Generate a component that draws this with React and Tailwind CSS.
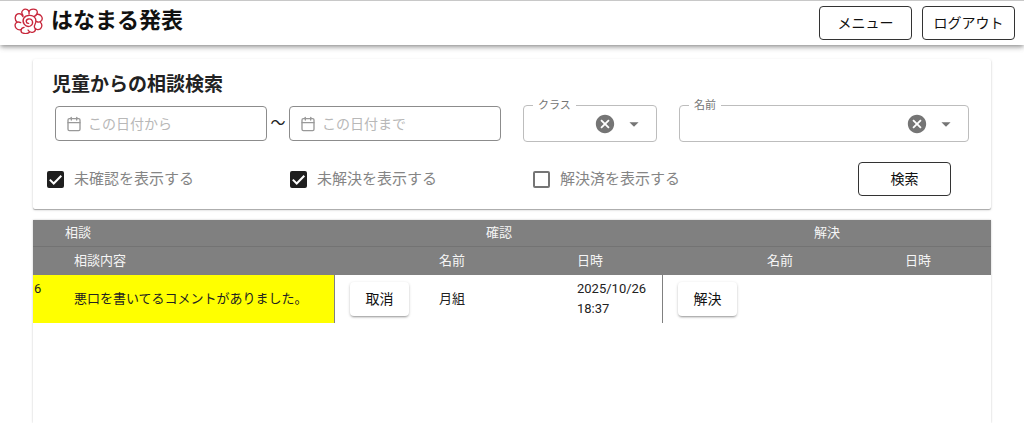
import { Calendar } from "lucide-react";
import { MdArrowDropDown, MdCancel } from "react-icons/md";

function FlowerLogo() {
  return (
    <svg
      viewBox="0 0 87 78"
      className="h-[26px] w-[29px] shrink-0"
      fill="none"
      stroke="#c8283c"
      strokeWidth="4"
      strokeLinecap="round"
      aria-hidden="true"
    >
      <path d="M27 22C17 10 31 0 40 5C45 8 46 13 45 18" />
      <path d="M45 11C48 1 68 0 70 12C70 19 66 23 61 25" />
      <path d="M69 19C80 17 88 29 83 37C79 43 72 43 67 40" />
      <path d="M79 43C88 51 82 66 71 65C65 64 61 59 61 54" />
      <path d="M65 62C64 75 48 77 42 66" />
      <path d="M47 72C39 80 21 77 21 68C21 62 25 59 30 58" />
      <path d="M21 65C9 68 1 57 4 48C7 42 14 41 20 44" />
      <path d="M9 42C0 34 3 17 15 17C21 17 25 21 27 26" />
      <path d="M44 46C36 47 33 36 43 33C56 31 61 47 49 54C34 60 23 43 29 31C36 19 58 19 65 33C67 40 66 46 62 52" />
    </svg>
  );
}

function OutlinedButton({ children }) {
  return (
    <button
      type="button"
      className="h-[34px] w-[93px] rounded-[4px] border border-[#333] bg-white text-sm text-[#111]"
    >
      {children}
    </button>
  );
}

function RaisedButton({ children }) {
  return (
    <button
      type="button"
      className="block h-[34px] w-[59px] rounded-[4px] bg-white text-sm text-[#111] shadow-[0_2px_2px_-1px_rgba(0,0,0,0.25),0_1px_3px_rgba(0,0,0,0.22)]"
    >
      {children}
    </button>
  );
}

function DateField({ label }) {
  return (
    <label className="flex h-[35px] w-[212px] items-center gap-1.5 rounded-[4px] border border-[#8c8c8c] px-2.5">
      <Calendar size={16} strokeWidth={2} className="shrink-0 text-[#999]" aria-hidden="true" />
      <input
        type="text"
        aria-label={label}
        placeholder={label}
        className="w-full min-w-0 bg-transparent text-sm text-[#222] outline-none placeholder:text-[#b8b8b8]"
      />
    </label>
  );
}

function SelectField({ id, label, className }) {
  return (
    <fieldset className={`min-w-0 rounded-[4px] border border-[#bdbdbd] ${className}`}>
      <legend className="ml-[9px] px-[5px] text-[11px] leading-[11px] text-[#757575]">
        <label htmlFor={id} className="block">
          {label}
        </label>
      </legend>
      <div className="flex h-[30px] items-center gap-[7px] pr-[11px] pb-1 pl-3">
        <select id={id} defaultValue="" className="h-full min-w-0 flex-1 appearance-none bg-transparent text-sm outline-none">
          <option value=""></option>
        </select>
        <button type="button" aria-label={`${label}をクリア`} className="shrink-0 text-[#757575]">
          <MdCancel size={22} />
        </button>
        <MdArrowDropDown size={22} className="shrink-0 text-[#757575]" aria-hidden="true" />
      </div>
    </fieldset>
  );
}

function CheckField({ label, checked }) {
  return (
    <label className="flex w-[243px] items-center gap-2.5 text-[15px] leading-5 text-[#858585]">
      <span className="grid shrink-0 place-items-center">
        <input
          type="checkbox"
          defaultChecked={checked}
          className="peer col-start-1 row-start-1 size-[17px] appearance-none rounded-[2px] border-2 border-[#757575] checked:border-[#1f1f1f] checked:bg-[#1f1f1f]"
        />
        <svg
          viewBox="0 0 17 17"
          className="pointer-events-none invisible col-start-1 row-start-1 size-[17px] peer-checked:visible"
          fill="none"
          stroke="white"
          strokeWidth="2"
          aria-hidden="true"
        >
          <path d="M2.8 8.6l3.9 3.9 7.6-7.7" />
        </svg>
      </span>
      {label}
    </label>
  );
}

export default function App() {
  return (
    <div className="flex min-h-screen flex-col bg-white font-[Roboto,'Noto_Sans_CJK_JP',sans-serif] text-[#222]">
      <header className="flex h-[45px] items-center justify-between border-t border-[#c8c8c8] bg-white pr-[9px] pl-3.5 shadow-[0_2px_4px_-1px_rgba(0,0,0,0.3),0_3px_5px_rgba(0,0,0,0.14),0_1px_8px_rgba(0,0,0,0.1)]">
        <div className="flex items-center gap-2 pb-1">
          <FlowerLogo />
          <span className="text-[22px] leading-8 font-bold text-[#111]">はなまる発表</span>
        </div>
        <nav className="flex gap-2.5">
          <OutlinedButton>メニュー</OutlinedButton>
          <OutlinedButton>ログアウト</OutlinedButton>
        </nav>
      </header>

      <main className="flex flex-1 flex-col gap-[11px] px-[33px] pt-3.5">
        <section className="h-[150px] rounded-[2px] bg-white pt-[13px] shadow-[0_1px_1px_rgba(0,0,0,0.28),0_1px_3px_rgba(0,0,0,0.14)]">
          <h1 className="pl-[19px] text-[19px] leading-[26px] font-bold">児童からの相談検索</h1>
          <div className="mt-[2px] flex items-end px-[22px]">
            <div className="mb-[1px] flex items-center">
              <DateField label="この日付から" />
              <span className="w-[22px] text-center text-[15px]">〜</span>
              <DateField label="この日付まで" />
            </div>
            <SelectField id="class" label="クラス" className="ml-[22px] w-[134px]" />
            <SelectField id="name" label="名前" className="ml-[22px] flex-1" />
          </div>
          <div className="mt-5 flex items-center pr-10 pl-3.5">
            <CheckField label="未確認を表示する" checked />
            <CheckField label="未解決を表示する" checked />
            <CheckField label="解決済を表示する" />
            <div className="flex flex-1 justify-end">
              <OutlinedButton>検索</OutlinedButton>
            </div>
          </div>
        </section>

        <section className="flex-1 bg-white shadow-[0_0_2px_rgba(0,0,0,0.22)]">
          <table className="w-full table-fixed border-separate border-spacing-0 text-left text-[13px] leading-5">
            <colgroup>
              <col className="w-[25px]" />
              <col />
              <col className="w-[88px]" />
              <col className="w-[138px]" />
              <col className="w-[102px]" />
              <col className="w-[88px]" />
              <col className="w-[138px]" />
              <col className="w-[102px]" />
            </colgroup>
            <thead className="bg-[#808080] text-[#f5f5f5]">
              <tr className="h-[27px]">
                <th colSpan={2} className="border-b border-[#737373] pl-8 font-normal">相談</th>
                <th colSpan={3} className="border-b border-[#737373] text-center font-normal">確認</th>
                <th colSpan={3} className="border-b border-[#737373] text-center font-normal">解決</th>
              </tr>
              <tr className="h-7">
                <th></th>
                <th className="pl-4 font-normal">相談内容</th>
                <th></th>
                <th className="pl-4 font-normal">名前</th>
                <th className="pl-4 font-normal">日時</th>
                <th></th>
                <th className="pl-4 font-normal">名前</th>
                <th className="pl-4 font-normal">日時</th>
              </tr>
            </thead>
            <tbody>
              <tr className="h-12">
                <td className="bg-[#ffff00] pt-1 pl-px align-top">6</td>
                <td className="border-r border-[#808080] bg-[#ffff00] pl-4">
                  悪口を書いてるコメントがありました。
                </td>
                <td className="pl-[15px]">
                  <RaisedButton>取消</RaisedButton>
                </td>
                <td className="pl-4">月組</td>
                <td className="border-r border-[#808080] py-1 pl-4">2025/10/26 18:37</td>
                <td className="pl-[15px]">
                  <RaisedButton>解決</RaisedButton>
                </td>
                <td></td>
                <td></td>
              </tr>
            </tbody>
          </table>
        </section>
      </main>
    </div>
  );
}
